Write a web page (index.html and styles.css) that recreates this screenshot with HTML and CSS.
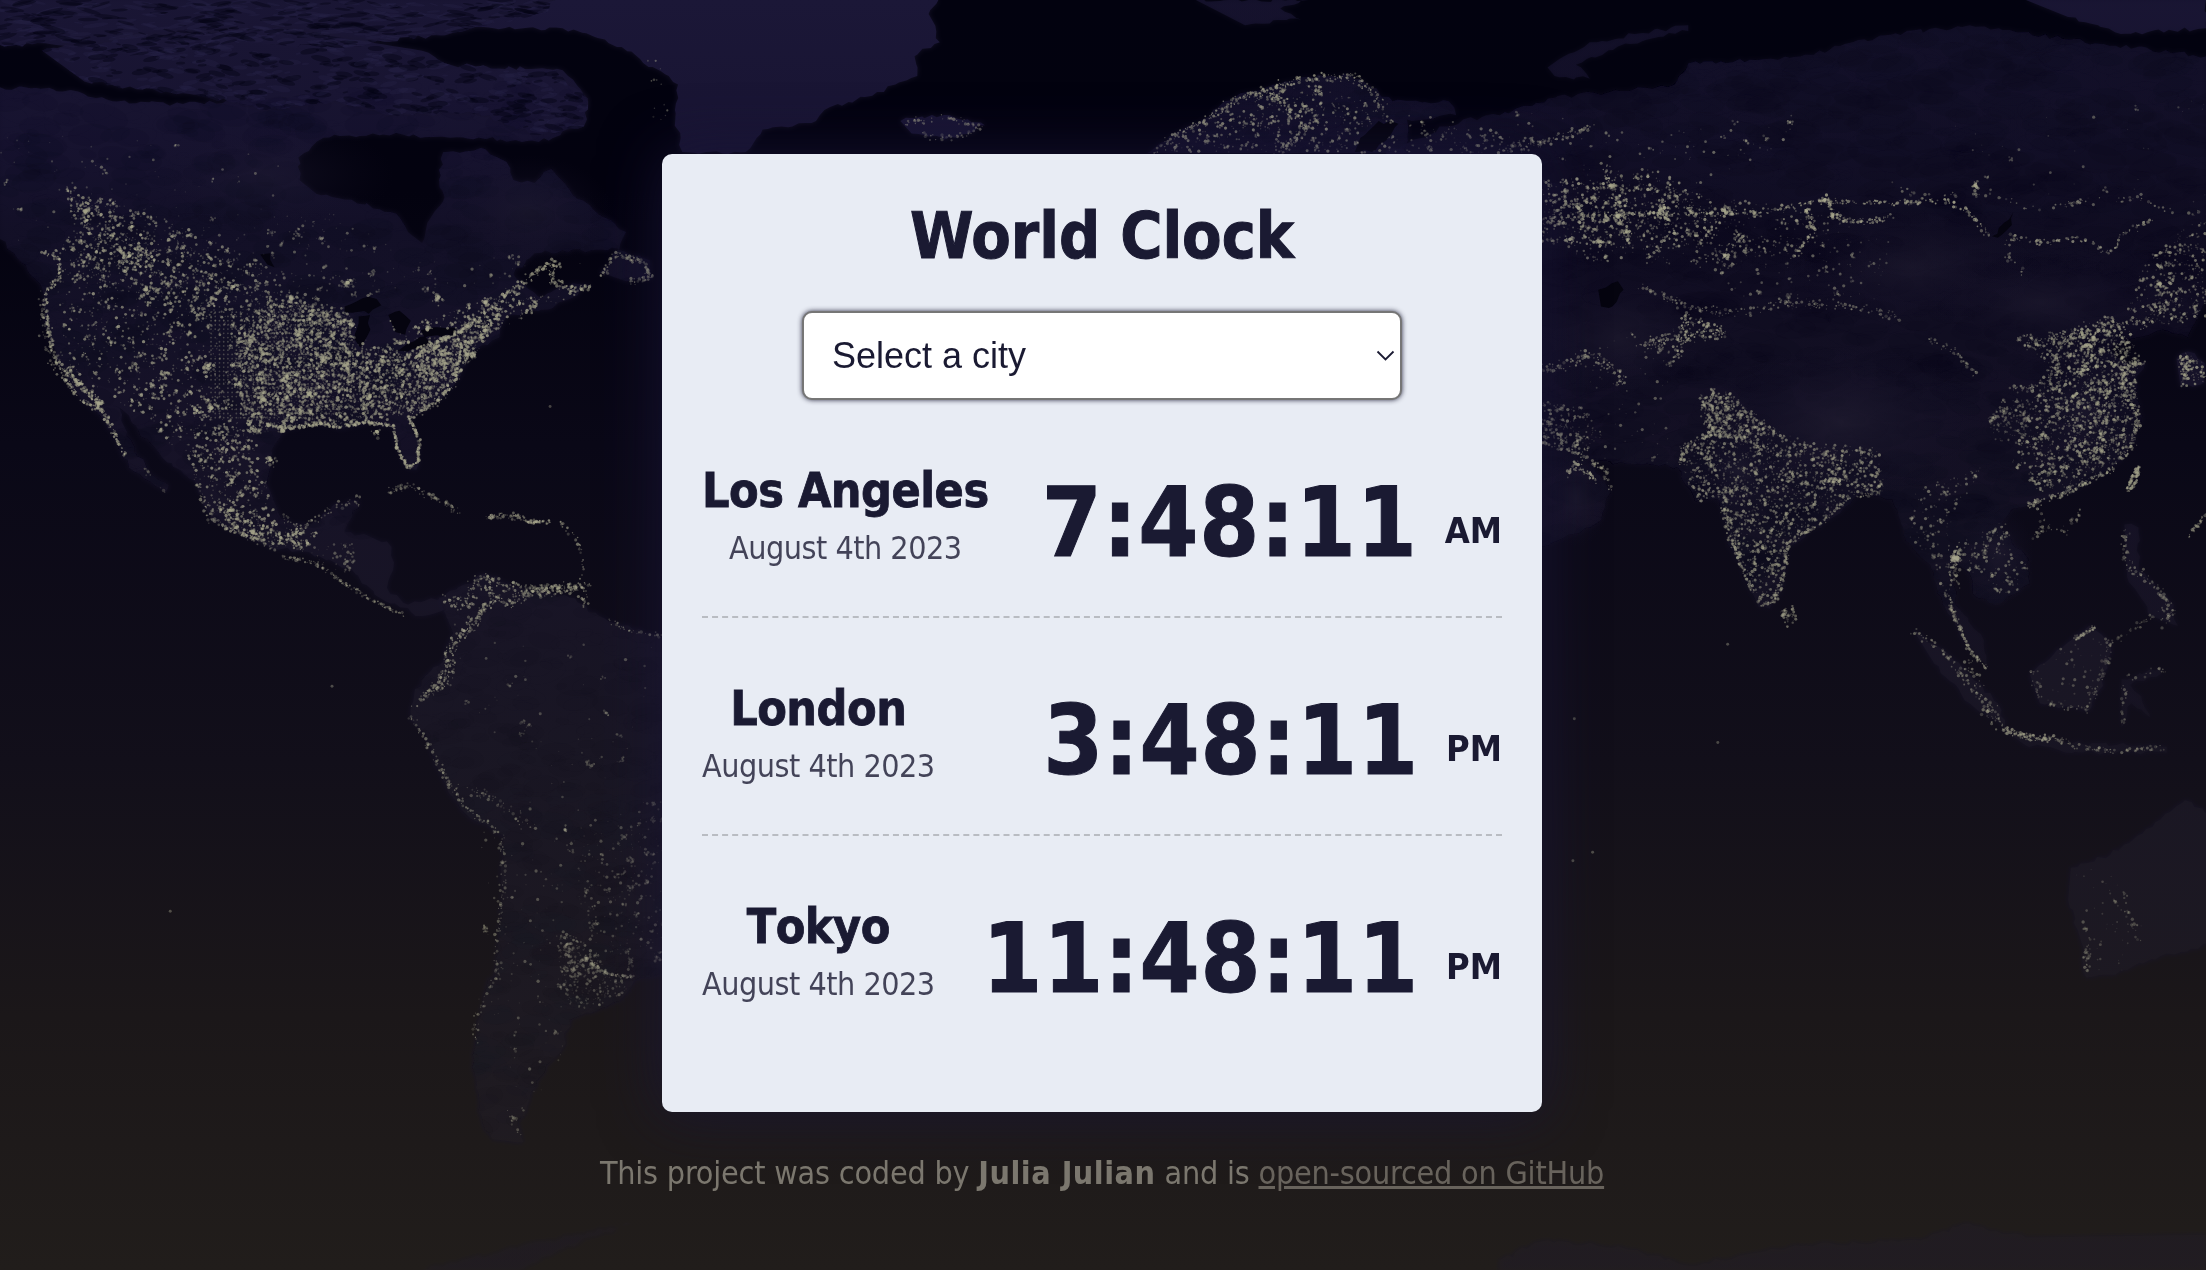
FILE: index.html
```html
<!DOCTYPE html>
<html lang="en">
<head>
<meta charset="utf-8">
<title>World Clock</title>
<link rel="stylesheet" href="styles.css">
</head>
<body>
<canvas class="night-map" id="map" width="2206" height="1270"></canvas>
<main class="container">
  <h1 class="title">World Clock</h1>
  <div class="picker">
    <select class="picker-select" aria-label="City">
      <option>Select a city</option>
      <option>Los Angeles</option>
      <option>London</option>
      <option>Tokyo</option>
    </select>
    <svg class="picker-arrow" width="19" height="12" viewBox="0 0 19 12"><path d="M1.5 1.5 9.5 9.5 17.5 1.5" fill="none" stroke="#1a1a32" stroke-width="1.8"/></svg>
  </div>
  <section class="city">
    <div class="place"><h2 class="name">Los Angeles</h2><div class="date">August 4th 2023</div></div>
    <div class="clock"><div class="time">7:48:11</div><small class="half">AM</small></div>
  </section>
  <section class="city">
    <div class="place"><h2 class="name">London</h2><div class="date">August 4th 2023</div></div>
    <div class="clock"><div class="time">3:48:11</div><small class="half">PM</small></div>
  </section>
  <section class="city">
    <div class="place"><h2 class="name">Tokyo</h2><div class="date">August 4th 2023</div></div>
    <div class="clock"><div class="time">11:48:11</div><small class="half">PM</small></div>
  </section>
</main>
<footer class="credit">This project was coded by <strong class="author">Julia Julian</strong> and is <a class="credit-link" href="#">open-sourced on GitHub</a></footer>
<script src="map.js"></script>
</body>
</html>
```
FILE: styles.css
```css
* { box-sizing: border-box; }
body {
  margin: 0;
  height: 1270px;
  overflow: hidden;
  padding-top: 154px;
  display: flex;
  flex-direction: column;
  align-items: center;
  background: #0d0a1a;
  color: #1a1a32;
  font-family: "DejaVu Sans Condensed", "DejaVu Sans", sans-serif;
  font-stretch: semi-condensed;
}
.night-map { position: absolute; inset: 0; z-index: -1; }
.container {
  width: 880px;
  height: 958px;
  margin-right: 2px;
  padding: 43px 40px 58px;
  border-radius: 10px;
  background: #e8ecf4;
  box-shadow: 0 0 60px rgba(26, 22, 58, 0.75);
}
.title {
  margin: 0 0 36px;
  font-size: 64px;
  line-height: 78px;
  text-align: center;
  -webkit-text-stroke: 1px #1a1a32;
}
.picker { position: relative; width: 600px; height: 88px; margin: 0 auto 1px; }
.picker-select {
  appearance: none;
  width: 600px;
  height: 89px;
  padding: 0 28px;
  border: 2px solid #767676;
  border-radius: 10px;
  background: #fff;
  box-shadow: 0 0 5px rgba(26, 26, 50, 0.9);
  color: #1a1a32;
  font: 36px "Liberation Sans", sans-serif;
}
.picker-arrow { position: absolute; right: 7px; top: 39px; }
.city {
  display: flex;
  justify-content: space-between;
  align-items: flex-start;
  height: 218px;
  padding-top: 61px;
  border-bottom: 2px dashed #b9bcc2;
}
.city:last-child { border-bottom: 0; }
.place { text-align: center; }
.name { margin: 0 0 10px; font-size: 48px; line-height: 58px; letter-spacing: -0.5px; font-kerning: none; -webkit-text-stroke: 0.8px #1a1a32; }
.date { font-size: 32px; line-height: 39px; letter-spacing: -0.5px; opacity: 0.8; }
.clock { display: flex; align-items: flex-start; padding-top: 4px; font-weight: bold; }
.time { font-size: 96px; line-height: 116px; letter-spacing: 0.9px; -webkit-text-stroke: 1px #1a1a32; }
.half { margin: 44px 0 0 27px; font-size: 36px; line-height: 44px; }
.credit {
  margin: 42px 2px 0 0;
  color: #7b776e;
  font-size: 32px;
  line-height: 39px;
  letter-spacing: -0.2px;
  white-space: nowrap;
}
.author { letter-spacing: 0.5px; }
.credit-link { color: #68635c; }
```
FILE: map.js
```js
// Night-time world map: land masses, lakes and city lights on a 1568-unit wide grid.
const ctx = document.getElementById('map').getContext('2d');
const W = 1568, H = 903;
ctx.scale(2206 / W, 1270 / H);

let seed = 20230804;
function rnd() {
  seed = (seed + 0x6D2B79F5) | 0;
  let t = Math.imul(seed ^ (seed >>> 15), 1 | seed);
  t = (t + Math.imul(t ^ (t >>> 7), 61 | t)) ^ t;
  return ((t ^ (t >>> 14)) >>> 0) / 4294967296;
}
function shape(pts) {
  const p = new Path2D();
  for (let i = 0; i < pts.length; i += 2) {
    const x = pts[i], y = pts[i + 1];
    if (!i) { p.moveTo(x, y); continue; }
    const px = pts[i - 2], py = pts[i - 1], d = Math.hypot(x - px, y - py);
    const n = Math.max(1, Math.floor(d / 4)), j = d > 100 ? 0 : 1.6;
    for (let k = 1; k < n; k++) p.lineTo(px + (x - px) * k / n + (rnd() - .5) * j * 2, py + (y - py) * k / n + (rnd() - .5) * j * 2);
    p.lineTo(x, y);
  }
  p.closePath();
  return p;
}

const base = ctx.createLinearGradient(0, 0, 0, H);
base.addColorStop(0, '#02020f');
base.addColorStop(.15, '#03020f');
base.addColorStop(.35, '#0a0817');
base.addColorStop(.6, '#120f1a');
base.addColorStop(.8, '#1b1719');
base.addColorStop(1, '#211d1b');
ctx.fillStyle = base;
ctx.fillRect(0, 0, W, H);

const land = {
  america: [0,62,50,64,80,72,130,74,190,70,250,62,320,50,400,50,418,70,415,85,390,100,320,98,265,95,230,98,212,112,213,128,225,138,250,142,282,152,290,165,300,173,306,155,316,140,312,128,315,108,345,106,360,115,365,128,380,130,392,120,405,135,425,152,445,165,440,178,462,185,464,198,445,200,426,194,440,177,420,178,380,180,365,195,385,212,400,203,421,203,390,220,360,225,355,240,335,250,325,270,310,285,292,298,298,320,296,334,288,332,282,318,280,305,262,300,240,305,225,300,205,305,193,320,190,345,198,365,208,373,228,370,236,360,258,354,250,368,245,378,275,385,280,400,275,418,290,430,315,425,318,432,300,438,270,425,250,405,215,392,195,390,150,370,140,345,115,325,85,290,90,310,105,335,120,345,118,350,95,335,75,300,50,275,40,255,32,230,30,205,10,180,0,170],
  arctic: [0,0,395,0,385,10,310,25,240,34,170,30,110,40,40,32,0,32],
  islands: [30,36,110,24,200,20,300,36,320,46,395,50,418,72,415,90,380,96,340,80,280,82,240,72,190,78,150,70,60,58],
  greenland: [395,0,667,0,660,10,668,30,650,40,652,54,620,68,590,76,580,86,542,92,530,108,485,108,480,85,482,60,455,42,430,28,400,20,330,20],
  iceland: [640,86,650,84,675,82,700,89,680,98,660,97,648,95],
  norway: [815,109,835,95,855,85,870,72,900,62,925,55,960,53,975,62,990,72,1030,72,1035,82,1000,85,1000,109],
  asia: [985,108,1040,85,1066,82,1100,70,1190,60,1200,45,1280,40,1340,25,1400,18,1470,28,1568,40,1568,215,1555,240,1540,235,1520,240,1500,248,1510,258,1525,258,1518,270,1522,300,1510,325,1485,345,1455,355,1430,362,1422,375,1440,395,1443,415,1420,430,1405,425,1400,408,1388,400,1390,430,1410,455,1413,475,1395,455,1380,425,1373,405,1355,385,1345,355,1325,350,1300,370,1270,390,1268,415,1258,433,1250,432,1230,390,1222,355,1205,357,1192,332,1160,330,1130,328,1145,350,1135,372,1100,388,1080,392],
  novaya: [1100,48,1130,30,1200,18,1200,22,1150,33,1120,46,1130,56,1105,54],
  polar: [1440,0,1568,0,1568,20,1510,24,1470,12],
  svalbard: [850,0,930,0,910,6,925,14,885,18],
  sumatra: [1360,448,1385,465,1420,500,1425,517,1400,500,1375,472],
  borneo: [1443,480,1460,465,1485,445,1500,457,1498,475,1485,505,1450,500],
  java: [1423,518,1450,524,1480,529,1540,531,1540,535,1480,535,1440,530],
  sulawesi: [1508,483,1536,475,1536,479,1514,487,1522,495,1528,510,1515,500,1508,517],
  luzon: [1510,373,1520,375,1520,405,1545,430,1548,445,1530,438,1512,410],
  korea: [1547,255,1555,250,1567,258,1567,272,1550,275],
  brazil: [312,425,345,408,375,420,405,425,430,440,470,453,478,690,455,695,440,712,425,718,405,725,400,745,385,765,375,785,368,800,372,812,350,810,340,790,336,750,345,705,352,690,357,640,358,595,330,578,315,555,300,520,292,512,295,490,315,470,322,450],
  australia: [1472,617,1500,608,1530,588,1553,569,1575,580,1575,670,1540,678,1500,693,1483,695,1478,665,1470,640],
  antarctica: [1066,896,1095,883,1150,886,1200,900,1280,886,1365,882,1400,870,1440,880,1568,878,1568,903,1066,903],
  antarctica2: [300,903,390,882,450,870,430,876,400,888,370,903]
};
const tint = ctx.createLinearGradient(0, 0, 0, H);
tint.addColorStop(0, '#1b1737');
tint.addColorStop(.12, '#181432');
tint.addColorStop(.18, '#131028');
tint.addColorStop(.35, '#171328');
tint.addColorStop(.6, '#1a1723');
tint.addColorStop(.85, '#1f1b20');
tint.addColorStop(1, '#231e20');
const faint = { asia: .5, america: .8, novaya: .5, polar: .8, svalbard: .6, java: .6, antarctica: .7, antarctica2: .5, arctic: .85, islands: .85, norway: .55, brazil: .85, sumatra: .8, luzon: .6, sulawesi: .5, australia: .85 };
const paths = {};
for (const k in land) {
  const p = paths[k] = shape(land[k]);
  ctx.save();
  ctx.globalAlpha = faint[k] || 1;
  ctx.shadowBlur = 5;
  ctx.shadowColor = 'rgba(24,20,44,.8)';
  ctx.fillStyle = tint;
  ctx.fill(p);
  ctx.restore();
}

// soft mottling inside the land masses
function mottle(name, box, n, colors, size, flat) {
  ctx.save();
  ctx.clip(paths[name]);
  for (let i = 0; i < n; i++) {
    const r = size * (.3 + rnd());
    ctx.fillStyle = colors[Math.floor(rnd() * colors.length)];
    ctx.beginPath();
    ctx.ellipse(box[0] + rnd() * box[2], box[1] + rnd() * box[3], r * flat, r, (rnd() - .5) * .6, 0, 7);
    ctx.fill();
  }
  ctx.restore();
}
const soft = ['rgba(3,3,18,.06)', 'rgba(36,31,56,.04)'];
const hard = ['rgba(3,3,18,.4)', 'rgba(40,35,74,.3)'];
mottle('america', [0,60,470,320], 1300, soft, 7, 2);
mottle('asia', [1060,20,510,410], 2000, soft, 8, 2.4);
mottle('brazil', [290,400,190,410], 700, ['rgba(12,10,22,.05)', 'rgba(36,32,50,.04)'], 6, 2);
mottle('islands', [20,15,400,85], 900, hard, 1.7, 3.4);
mottle('arctic', [0,0,400,40], 560, hard, 1.3, 6);
mottle('norway', [810,50,230,60], 200, soft, 5, 2);

function glow(x, y, rx, ry, color) {
  ctx.save();
  ctx.translate(x, y);
  ctx.scale(rx, ry);
  const g = ctx.createRadialGradient(0, 0, 0, 0, 0, 1);
  g.addColorStop(0, color);
  g.addColorStop(1, 'rgba(20,16,40,0)');
  ctx.fillStyle = g;
  ctx.fillRect(-1, -1, 2, 2);
  ctx.restore();
}
glow(1310, 300, 100, 55, 'rgba(34,30,50,.65)');
glow(1360, 190, 90, 40, 'rgba(34,30,50,.5)');
glow(1450, 215, 80, 35, 'rgba(34,30,50,.45)');
glow(1150, 240, 60, 40, 'rgba(34,30,50,.55)');
glow(1120, 355, 24, 34, 'rgba(34,30,50,.55)');
glow(1235, 335, 30, 30, 'rgba(34,30,50,.6)');
glow(1420, 395, 26, 36, 'rgba(34,30,50,.5)');
glow(1480, 290, 36, 50, 'rgba(34,30,50,.4)');
glow(190, 125, 90, 40, 'rgba(34,30,52,.4)');
glow(375, 150, 60, 40, 'rgba(34,30,52,.45)');

// open water inside the land
const lakes = [[245,218,262,211,271,217,262,223,245,222],[252,241,255,225,263,224,261,239,256,247],[276,224,284,221,292,228,288,238,281,236],[280,249,302,239,305,243,290,250],[299,235,324,233,322,239,302,240],[1136,206,1150,200,1154,206,1146,218,1138,218],[967,98,980,86,994,88,985,100,975,108,963,108]];
ctx.fillStyle = '#05040f';
lakes.concat([[1416,168,1428,156,1431,151,1430,160,1420,169],[185,181,192,180,195,190,190,188]]).forEach(p => ctx.fill(shape(p)));

// lights
function inside(pts, x, y) {
  let c = false;
  for (let i = 0, j = pts.length - 2; i < pts.length; j = i, i += 2)
    if ((pts[i + 1] > y) !== (pts[j + 1] > y) && x < (pts[j] - pts[i]) * (y - pts[i + 1]) / (pts[j + 1] - pts[i + 1]) + pts[i]) c = !c;
  return c;
}
function dot(x, y, s, a) {
  if (lakes.some(l => inside(l, x, y))) return;
  const v = rnd() * 14;
  ctx.fillStyle = `rgba(${158 + v | 0},${157 + v | 0},${132 + v | 0},${Math.min(1, a)})`;
  ctx.beginPath();
  ctx.arc(x, y, s * 1.06, 0, 7);
  ctx.fill();
}
function scatter(pts, n, bright, clump = .1) {
  let x0 = 1e9, y0 = 1e9, x1 = 0, y1 = 0;
  for (let i = 0; i < pts.length; i += 2) { x0 = Math.min(x0, pts[i]); x1 = Math.max(x1, pts[i]); y0 = Math.min(y0, pts[i + 1]); y1 = Math.max(y1, pts[i + 1]); }
  for (let i = 0; i < n;) {
    const x = x0 + rnd() * (x1 - x0), y = y0 + rnd() * (y1 - y0);
    if (!inside(pts, x, y)) continue;
    i++;
    const b = Math.pow(rnd(), 2.4);
    dot(x, y, .4 + b * .75, bright * (.35 + b * .9));
    // some settlements grow into small clumps
    if (rnd() < clump) {
      const m = 2 + rnd() * 5;
      for (let k = 0; k < m; k++) dot(x + (rnd() - .5) * 3.6, y + (rnd() - .5) * 3.6, .45 + rnd() * .5, bright * (.5 + rnd() * .5));
    }
  }
}
function coast(pts, per, spread, bright) {
  for (let i = 2; i < pts.length; i += 2) {
    const dx = pts[i] - pts[i - 2], dy = pts[i + 1] - pts[i - 1], n = Math.hypot(dx, dy) * per;
    for (let k = 0; k < n; k++) {
      const t = rnd();
      dot(pts[i - 2] + dx * t + (rnd() + rnd() - 1) * spread, pts[i - 1] + dy * t + (rnd() + rnd() - 1) * spread, .4 + Math.pow(rnd(), 2) * .8, bright * (.4 + rnd() * .7));
    }
  }
}
function town(x, y, r, n, bright) {
  for (let i = 0; i < n; i++) {
    const a = rnd() * 6.283, d = r * rnd() * rnd();
    dot(x + Math.cos(a) * d, y + Math.sin(a) * d, .4 + rnd() * .8, bright * (.4 + rnd() * .6));
  }
}

scatter([190,212,245,218,256,247,282,247,320,236,350,230,340,250,322,272,300,290,270,300,205,303,180,310,165,270,170,230], 2700, .56, .05);
scatter([190,215,250,225,262,245,300,240,330,255,300,292,205,305,180,280], 1100, .6, .06);
scatter([40,170,110,165,190,200,180,330,140,335,100,295,50,265,38,200], 1150, .6);
scatter([45,130,110,150,200,195,200,225,150,225,60,200], 600, .55);
scatter([45,133,75,145,115,178,110,200,75,182,50,150], 170, .7);
scatter([140,300,180,305,195,365,215,392,180,385,150,365,130,325], 330, .6);
scatter([155,355,190,372,225,380,215,392,165,378], 190, .7);
scatter([0,90,200,110,210,165,200,200,0,170], 90, .42);
scatter([180,145,240,150,300,185,430,180,420,190,330,205,200,215,180,190], 150, .42);
scatter([280,235,350,212,365,200,375,212,420,205,350,236,330,262,300,275], 420, .65);
for (let x = 150; x < 235; x += 3) for (let y = 222; y < 300; y += 3) if (rnd() > .2) dot(x, y, .6, .34);
coast([28,178,42,184,43,196,32,208,33,230,38,252,48,272,58,285,72,291,82,310,90,325], 1.6, 2, .7);
coast([46,262,58,275,72,288], 3.4, 3, .75);
coast([30,212,32,235,40,262], 1, 8, .5);
coast([188,302,206,304,228,301,240,304,260,300,280,303,282,318,290,333,297,328,298,312,290,296], 2.5, 1.5, .72);
coast([292,296,310,286,324,272,326,250,342,238,357,220], 2, 3, .75);
coast([318,240,340,227,360,210,380,194,394,186,392,200,405,205,420,204], 1.9, 3, .7);
coast([428,196,438,180,456,186,463,198,446,200], 1.6, 3, .55);
coast([300,250,325,236,350,225], 2, 3, .75);
coast([205,208,232,225,252,244], 1, 9, .5);
coast([140,345,150,370,195,390], 1.1, 3, .6);
coast([100,330,118,350], .3, 2, .4);
coast([200,368,215,376,236,361,256,356], 1, 4, .55);
coast([275,350,290,345,310,355,328,364], 1.4, 3, .5);
coast([345,368,362,366,378,371], 1.8, 3, .6);
coast([375,371,392,371], 2.2, 1.8, .8);
coast([398,371,410,383,414,398,412,415,420,416], .55, 2, .6);
coast([200,396,225,400,245,415,265,427,288,438], 1.2, 2, .55);
scatter([215,390,250,385,255,405,240,408], 40, .4);
[[212,238],[230,256],[204,268],[268,307],[187,284],[201,306],[312,212],[247,259],[92,182],[61,150],[104,206],[247,201],[148,260],[170,273],[220,280],[263,282],[281,231],[304,234],[332,252],[180,378],[250,231],[70,287],[345,215],[150,290],[192,327],[140,292],[207,212]].forEach(c => town(c[0], c[1], 6.5, 26, .7));

coast([462,44,470,60,470,82], .3, 10, .45);
coast([643,90,650,86,675,84,699,90,682,97,665,98,655,95], .7, 3, .55);
coast([820,107,840,95,860,85,875,72,905,62,928,56,960,54,975,65,985,78], 1.4, 4, .7);
scatter([840,100,880,75,930,58,965,70,990,85,995,108,825,108], 430, .62);
coast([888,66,910,70,930,92,908,108], 1.5, 4, .7);
scatter([1000,80,1050,90,1100,100,1096,109,1000,108], 110, .5);
scatter([1060,75,1180,95,1270,80,1290,90,1200,140,1100,120], 90, .5);
scatter([1380,90,1568,70,1568,150,1480,160,1400,130], 40, .4);

scatter([1096,128,1180,122,1230,150,1220,170,1180,180,1096,172], 450, .68);
scatter([1096,140,1150,130,1290,150,1320,160,1270,180,1200,190,1130,185,1096,170], 420, .52);
coast([1096,157,1145,152,1200,152,1255,150,1290,143,1345,144,1385,143,1398,150,1414,168], .9, 2.5, .72);
coast([1285,150,1290,165,1280,175,1275,185], 1.3, 3, .7);
coast([1300,145,1310,157,1330,158,1345,153], 1.4, 3, .7);
coast([1140,120,1150,140,1155,160], 1.8, 5, .6);
coast([1345,130,1365,140,1400,138,1420,140,1440,148,1520,140,1540,150,1568,152], .35, 3, .5);
coast([1427,168,1450,173,1480,170,1500,180,1510,165,1530,157], .8, 3, .65);
coast([1427,170,1428,185,1440,195], .5, 3, .5);
coast([1205,188,1240,168,1225,180,1225,195], .9, 5, .6);
coast([1070,107,1120,95,1135,87], 1, 3, .6);
scatter([1200,170,1350,170,1330,220,1240,220], 130, .42);
coast([1165,203,1205,220,1240,222,1270,215,1315,218,1350,225], .9, 4, .52);
coast([1165,245,1195,240,1225,237,1200,226,1190,256], 1.8, 5, .68);
coast([1096,263,1115,259,1130,252,1150,265,1155,275], 1.6, 6, .6);
scatter([1096,285,1125,290,1140,310,1125,322,1096,310], 170, .5);
coast([1096,315,1122,322,1140,334,1145,348], 1.2, 3, .6);
coast([1112,337,1122,330,1134,342], 2, 4, .8);
scatter([1130,235,1190,230,1190,330,1130,325], 60, .42);
[[1150,154],[1145,132],[1156,165],[1180,150],[1122,148],[1226,150],[1226,182],[1297,142],[1303,153],[1284,150],[1183,148],[1116,170],[1137,172],[1535,202],[1488,240],[1404,132]].forEach(c => town(c[0], c[1], 5, 20, .8));
scatter([1208,278,1228,278,1258,302,1285,315,1335,318,1340,350,1320,350,1285,375,1270,390,1266,425,1256,432,1246,420,1228,385,1222,355,1205,357,1193,325,1210,310], 1750, .52, .06);
scatter([1208,280,1225,278,1260,305,1245,315,1215,308], 300, .5, .03);
coast([1194,332,1196,320,1212,310,1225,305], 1.5, 3, .6);
coast([1225,345,1228,375,1240,410,1252,430,1260,428,1268,408,1272,385,1295,372,1315,353,1337,350], 1.3, 2, .55);
coast([1296,342,1310,342], 3, 3, .8);
scatter([1430,240,1500,230,1522,250,1518,275,1522,300,1508,325,1480,345,1450,350,1430,330,1440,290,1460,265], 1200, .55, .08);
scatter([1475,230,1500,225,1520,240,1510,325,1480,330,1465,290,1470,250], 430, .64, .08);
scatter([1411,300,1425,283,1445,285,1440,310,1420,315], 150, .42);
scatter([1525,185,1568,150,1568,225,1540,232,1510,225], 300, .55);
coast([1440,245,1478,238,1500,230,1525,230,1545,210], 1.4, 5, .62);
coast([1430,277,1450,275,1462,260,1465,245,1475,240], 1.4, 4, .6);
coast([1372,242,1390,250,1405,267], .9, 3, .5);
coast([1524,258,1510,260,1508,275,1520,295,1517,315,1500,335,1470,350,1440,360], 1.6, 3, .62);
coast([1512,348,1518,334,1520,332,1518,343,1512,350], 2.1, 1, .7);
scatter(land.korea, 90, .65);
scatter([1380,390,1425,370,1440,400,1436,418,1425,425,1400,405,1385,440,1375,400,1355,380,1360,350,1410,330], 240, .46);
coast([1392,387,1391,398,1388,412], 1.6, 4, .65);
town(1391, 397, 9, 60, .7);
coast([1385,425,1392,445,1400,462,1412,475], 1.6, 2, .6);
coast([1360,449,1380,462,1395,480,1415,505,1422,517], .9, 4, .5);
coast([1398,470,1410,500,1420,515], 1, 7, .5);
coast([1422,518,1440,524,1465,526], 2.4, 3, .62);
coast([1465,526,1480,532,1510,534,1540,531], .9, 2.5, .5);
scatter(land.borneo, 60, .34);
coast([1445,478,1452,500,1485,505,1494,480,1500,457,1520,445,1540,430], .7, 3, .42);
coast([1508,515,1509,495,1512,482,1538,475], .5, 3, .4);
coast([1511,375,1510,395,1516,405,1530,415,1545,435,1538,445], 1.2, 4, .5);
coast([1475,455,1490,445], 2, 1.5, .6);
scatter([1265,434,1274,430,1279,440,1270,447], 40, .5);
coast([1480,363,1470,378,1453,375,1446,382,1453,370,1445,355], .7, 4, .45);
coast([1555,382,1568,365], 1.4, 2, .6);

coast([318,425,330,430,342,412,375,420,410,418], 2, 6, .62);
coast([345,417,360,430,378,420,412,417,415,430], 1.7, 5, .62);
coast([350,425,335,445,320,460,318,480,305,492], 2.3, 5, .62);
coast([292,510,300,522,318,555,330,573,355,592], 1, 2.5, .5);
coast([295,500,305,492,320,485], 1.4, 4, .5);
coast([320,558,345,565,365,578,380,592], .7, 5, .38);
coast([357,595,358,625,352,680,356,690,340,718,338,740], .75, 3, .42);
coast([430,440,445,448,470,452], .6, 2, .5);
scatter([395,660,410,665,430,685,448,703,425,717,405,717,398,690], 330, .34, .03);
coast([415,680,428,690,436,694,450,694], 2, 1.6, .45);
scatter([400,600,478,560,478,680,445,690,420,670], 270, .32);
scatter([340,590,400,590,400,760,370,790,350,750], 110, .34);
scatter([300,440,470,460,470,600,380,590], 70, .35);
coast([363,793,370,805], 1.2, 5, .36);
town(402, 590, 4, 10, .45);

scatter([1475,620,1500,615,1530,650,1510,690,1485,695], 45, .33);
coast([1484,665,1483,690], 1.1, 3, .42);
coast([1508,645,1521,668], .7, 5, .33);
[[391,289],[1118,612],[1132,606],[1228,458],[1221,528],[1119,511],[121,648],[236,488]].forEach(c => dot(c[0], c[1], 1, .4));
```
